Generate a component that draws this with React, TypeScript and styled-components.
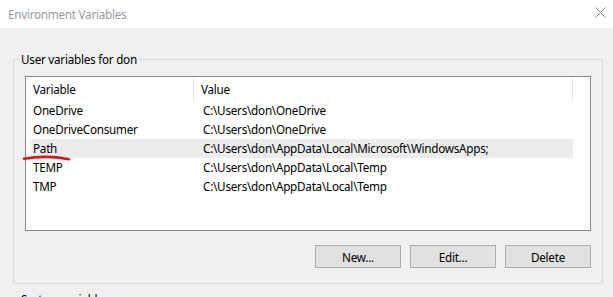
import styled, { createGlobalStyle } from "styled-components";

const GlobalStyle = createGlobalStyle`
  html, body {
    margin: 0;
    padding: 0;
    background: #f0f0f0;
  }
  body {
    font-family: "Noto Sans", "Open Sans", sans-serif;
    font-size: 11.7px;
    letter-spacing: -0.25px;
    color: #000;
  }
`;

const Window = styled.div`
  width: 613px;
  height: 297px;
  overflow: hidden;
  background: #f0f0f0;
`;

const TitleBar = styled.div`
  height: 28px;
  background: #fff;
  display: flex;
  align-items: center;
  justify-content: space-between;
  padding: 0 7px 0 8px;
  color: #999;
`;

const Close = styled.svg`
  width: 11px;
  height: 11px;
  margin-top: -3px;
`;

const Group = styled.fieldset<{ $height?: number }>`
  margin: 0 10px 0 13px;
  padding: 0 11px;
  border: 1px solid #dcdcdc;
  min-width: 0;
  box-sizing: border-box;
  height: ${(p) => (p.$height ? `${p.$height}px` : "auto")};

  & + & {
    margin-top: 7px;
  }
`;

const Legend = styled.legend`
  padding: 0 2px;
  margin-left: -6px;
  line-height: 16px;
  color: #000;
`;

const Body = styled.div`
  padding-top: 23px;
`;

const ListBox = styled.div`
  position: relative;
  margin-top: 9px;
  height: 155px;
  box-sizing: border-box;
  border: 1px solid #828790;
  background: #fff;
  padding-left: 5px;
`;

const Row = styled.div<{ $selected?: boolean }>`
  position: relative;
  display: grid;
  grid-template-columns: 170px 1fr;
  width: 542px;
  height: 19px;
  line-height: 19px;
  background: ${(p) => (p.$selected ? "#ececec" : "transparent")};
  white-space: nowrap;
`;

const Header = styled(Row)`
  height: 24px;
  line-height: 24px;
  grid-template-columns: 163px 379px;
`;

const HeadCell = styled.div<{ $pad: number }>`
  padding-left: ${(p) => p.$pad}px;
  border-right: 1px solid #e5e5e5;
`;

const Cell = styled.div`
  padding-left: 2px;
`;

const Underline = styled.svg`
  position: absolute;
  left: -8px;
  top: 16px;
  width: 48px;
  height: 7px;
  overflow: visible;
`;

const Buttons = styled.div`
  display: flex;
  justify-content: flex-end;
  gap: 9px;
  margin-top: 14px;
`;

const Button = styled.button`
  width: 86px;
  height: 23px;
  box-sizing: border-box;
  background: #e1e1e1;
  border: 1px solid #adadad;
  font-family: inherit;
  font-size: inherit;
  letter-spacing: inherit;
  color: #000;
  padding: 0;
`;

const rows = [
  ["OneDrive", "C:\\Users\\don\\OneDrive"],
  ["OneDriveConsumer", "C:\\Users\\don\\OneDrive"],
  ["Path", "C:\\Users\\don\\AppData\\Local\\Microsoft\\WindowsApps;"],
  ["TEMP", "C:\\Users\\don\\AppData\\Local\\Temp"],
  ["TMP", "C:\\Users\\don\\AppData\\Local\\Temp"],
];

export default function App() {
  return (
    <Window>
      <GlobalStyle />
      <TitleBar>
        <span>Environment Variables</span>
        <Close viewBox="0 0 11 11">
          <path d="M0.5 0.5 L10.5 10.5 M10.5 0.5 L0.5 10.5" stroke="#8a8a8a" strokeWidth="1" />
        </Close>
      </TitleBar>
      <Body>
        <Group $height={233}>
          <Legend>User variables for don</Legend>
          <ListBox>
            <Header>
              <HeadCell $pad={2}>Variable</HeadCell>
              <HeadCell $pad={7}>Value</HeadCell>
            </Header>
            {rows.map(([name, value]) => (
              <Row key={name} $selected={name === "Path"}>
                <Cell>{name}</Cell>
                <Cell>{value}</Cell>
                {name === "Path" && (
                  <Underline viewBox="0 0 48 7">
                    <path
                      d="M1 3.8 C 12 1.8, 30 1.2, 46 4.2"
                      stroke="#d8141c"
                      strokeWidth="2.6"
                      fill="none"
                      strokeLinecap="round"
                    />
                  </Underline>
                )}
              </Row>
            ))}
          </ListBox>
          <Buttons>
            <Button>New...</Button>
            <Button>Edit...</Button>
            <Button>Delete</Button>
          </Buttons>
        </Group>
        <Group>
          <Legend>System variables</Legend>
          <ListBox />
        </Group>
      </Body>
    </Window>
  );
}
